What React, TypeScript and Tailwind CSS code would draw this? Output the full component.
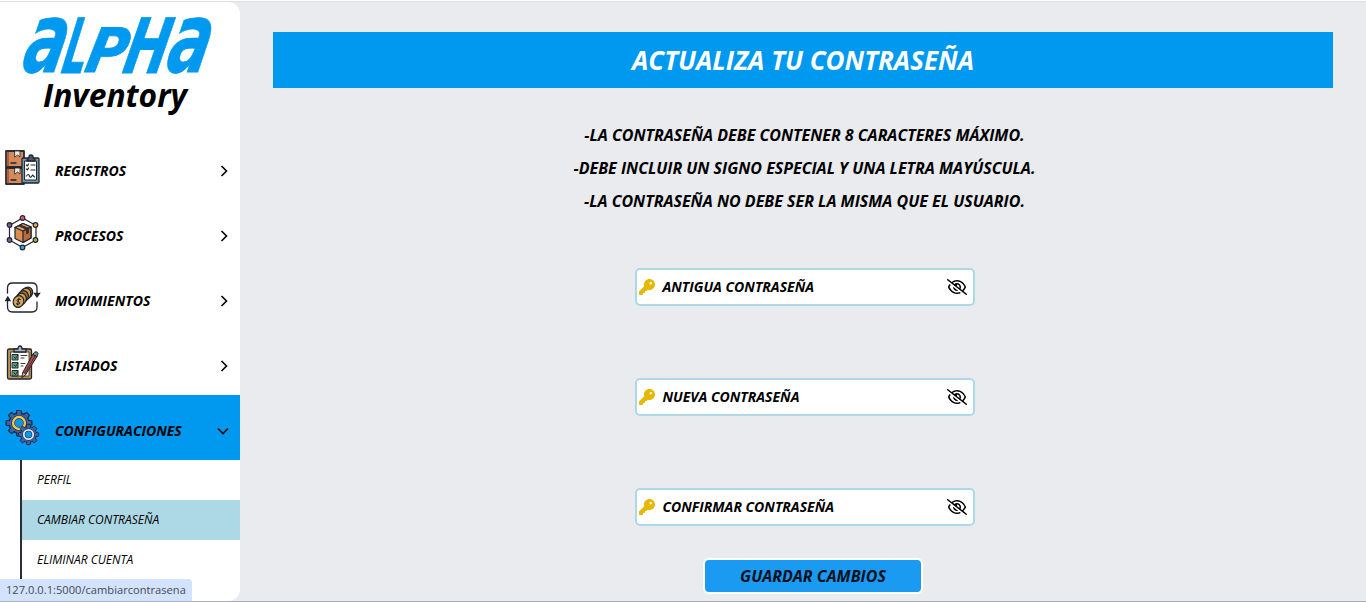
import type { ReactNode } from "react";
import { FaKey, FaRegEyeSlash } from "react-icons/fa6";

const ink = "#20242e";

function Logo() {
  return (
    <svg width="192" height="60" viewBox="0 0 192 60" className="block overflow-visible" fill="#0099f0" stroke="#0099f0" strokeWidth="0.8" fontFamily="'DejaVu Sans', sans-serif" fontWeight="700" aria-label="ALPHA">
      <g transform="translate(12.5 -1) skewX(-12)">
        <text x="-1" y="57.5" fontSize="97" textLength="42" lengthAdjust="spacingAndGlyphs">a</text>
        <text x="39" y="58.5" fontSize="76" textLength="24" lengthAdjust="spacingAndGlyphs">L</text>
        <text x="62" y="58.5" fontSize="61" textLength="41" lengthAdjust="spacingAndGlyphs">P</text>
        <text x="100" y="58.5" fontSize="76" textLength="44" lengthAdjust="spacingAndGlyphs">H</text>
        <text x="143" y="57.5" fontSize="97" textLength="42" lengthAdjust="spacingAndGlyphs">a</text>
      </g>
    </svg>
  );
}

function BoxesIcon() {
  return (
    <svg width="36" height="36" viewBox="0 0 36 36" stroke={ink} strokeWidth="1.3" strokeLinejoin="round" strokeLinecap="round">
      <path d="M1 1h18v16H1zM1 18h18v16H1z" fill="#d58a5c" />
      <path d="M1 1h3v16H1zM1 18h3v16H1z" fill="#a9613d" stroke="none" />
      <path d="M1 1h18v16H1zM1 18h18v16H1z" fill="none" />
      <path d="M10 1h5v6l-2.5-2L10 7zM10 18h5v6l-2.5-2-2.5 2z" fill="#f2eadf" strokeWidth="0.8" />
      <path d="M6 30h5M6 13h5" />
      <rect x="17" y="8" width="17" height="25" rx="1" fill="#6f9eaa" />
      <path d="M20 11h11.5v19H20z" fill="#fff" strokeWidth="1" />
      <path d="M22 10c0-2 2-1 2-3a2 2 0 0 1 4 0c0 2 2 1 2 3v1h-8z" fill="#4b5564" />
      <path d="m21.5 15 1 1 1-2M26 15h4M21.5 19l1 1 1-2M26 20h4M21.5 26q2-3 3 0t3-1l2 2" fill="none" strokeWidth="1.1" />
    </svg>
  );
}

function ProcessIcon() {
  return (
    <svg width="36" height="36" viewBox="0 0 36 36" stroke={ink} strokeWidth="1.2" strokeLinejoin="round">
      <path d="M17.5 3 31 10.500v14.500L17.500 32.500 4.500 25V10.500z" fill="none" />
      <circle cx="17.5" cy="3" r="2.3" fill="#e85670" />
      <circle cx="30.5" cy="10" r="2.3" fill="#e9ab3f" />
      <circle cx="30.5" cy="25" r="2.3" fill="#8bc52d" />
      <circle cx="17.5" cy="32.5" r="2.3" fill="#399fe3" />
      <circle cx="4.5" cy="25" r="2.3" fill="#7861a5" />
      <circle cx="4.5" cy="10" r="2.3" fill="#7f5c97" />
      <path d="m10 12.5 8-4 8 3.500v11l-8 4.500-8-4z" fill="#d98c54" />
      <path d="m10 12.5 8-4 8 3.500-8 4z" fill="#e5a66e" />
      <path d="m18 16 8-4v11l-8 4.500z" fill="#b76d3b" />
      <path d="m13.5 11 8 3.500v4.500l2-1v-5L15.500 10z" fill="#3a2a26" strokeWidth="0.6" />
    </svg>
  );
}

function CoinsIcon() {
  return (
    <svg width="36" height="36" viewBox="0 0 36 36" stroke={ink} strokeWidth="1.3" strokeLinecap="round">
      <path d="M2.5 13V8q0-5 5-5H27q5 0 5 5v6M32 22v5q0 5-5 5H7.500q-5 0-5-5v-7" fill="none" />
      <path d="M.7 20.500 2.800 17l2.200 3.500zM29.500 13.500h5L32 17z" fill={ink} />
      <ellipse cx="22.5" cy="12.5" rx="5" ry="5.5" fill="#a77129" transform="rotate(25 22.5 12.5)" />
      <ellipse cx="20.5" cy="14" rx="5.2" ry="6" fill="#d7a14b" transform="rotate(25 20.5 14)" />
      <ellipse cx="18" cy="16.5" rx="5.2" ry="6" fill="#a77129" transform="rotate(25 18 16.5)" />
      <ellipse cx="16" cy="19" rx="5.2" ry="6" fill="#d7a14b" transform="rotate(25 16 19)" />
      <ellipse cx="13.5" cy="21.5" rx="5.2" ry="6" fill="#d9a754" transform="rotate(25 13.5 21.5)" />
      <path d="M15.5 19.500q-3-1.500-3.500.800 0 1 1.500 1.400 2 .6 1 2.100-1 1.200-3.200 0M14 18l-1.500 7" fill="none" strokeWidth="1" />
    </svg>
  );
}

function ChecklistIcon() {
  return (
    <svg width="36" height="36" viewBox="0 0 36 36" stroke={ink} strokeWidth="1.3" strokeLinejoin="round" strokeLinecap="round">
      <rect x="2.5" y="4" width="24" height="30" rx="1.5" fill="#bd9356" />
      <path d="M6 7h18v24H6z" fill="#fffdf5" strokeWidth="0.8" />
      <path d="M9 7V4h4q0-3 2-3t2 3h4v3z" fill="#a7b3c5" />
      <path d="M7.5 9.500h5.500v5.500H7.500zM7.500 17.500h5.500v5.500H7.500zM7.500 25.500h5.500V31H7.500z" fill="#4f9f7a" strokeWidth="1" />
      <path d="m9 12 1.500 1.500L13 10M9 20l1.500 1.500L13 18M9 28l1.500 1.500L13 26M16 10.500h6M16 13h3M16 18.500h4M16 21h2" fill="none" strokeWidth="0.9" />
      <path d="m17 32 1-5L28 9l4 2.500L21 29z" fill="#ad4a49" strokeWidth="1" />
      <path d="m28 9 1.500-1.800q1.500-1 2.700 0 1.400 1.300.5 2.600l-.7 1.700z" fill="#6c9187" strokeWidth="1" />
      <path d="m20 28 10-17M17 32l1-5 3 2z" fill="#e3b08d" strokeWidth="0.7" />
    </svg>
  );
}

function Gear({ x, y, s, ring }: { x: number; y: number; s: number; ring: string }) {
  return (
    <g transform={`translate(${x} ${y}) scale(${s})`}>
      <g fill="#3e639f" stroke="#182b4c" strokeWidth="1.2">
        {[0, 45, 90, 135, 180, 225, 270, 315].map((a) => (
          <path key={a} d="M-3-9-2-13H2l1 4z" transform={`rotate(${a})`} />
        ))}
        <circle r="10" />
      </g>
      <g fill="#3e639f">
        {[0, 45, 90, 135, 180, 225, 270, 315].map((a) => (
          <path key={a} d="M-2.200-8.500-1.500-12h3l.7 3.500z" transform={`rotate(${a})`} />
        ))}
      </g>
      <circle r="6" fill="#0b96e9" stroke="#182b4c" strokeWidth="3.8" />
      <circle r="6" fill="none" stroke={ring} strokeWidth="2.4" />
    </g>
  );
}

function GearsIcon() {
  return (
    <svg width="36" height="36" viewBox="0 0 36 36">
      <Gear x={14} y={13} s={0.99} ring="#f3c64c" />
      <Gear x={23.5} y={24.5} s={0.78} ring="#d9e5ee" />
    </svg>
  );
}

function Chevron({ down = false }: { down?: boolean }) {
  return (
    <svg width="12" height="12" viewBox="0 0 12 12" fill="none" stroke="#06090d" strokeWidth="1.7" className={down ? "mt-[6px] mr-[11px]" : "mt-[6px] mr-[10px]"}>
      <path d={down ? "m1 3.5 5 5 5-5" : "m3.5 1 5 5-5 5"} />
    </svg>
  );
}

function MenuItem({ icon, label, active = false }: { icon: ReactNode; label: string; active?: boolean }) {
  return (
    <a className={`flex h-[65px] items-center ${active ? "bg-[#0099f0]" : ""}`}>
      <span className="ml-[5px] w-[50px] shrink-0">{icon}</span>
      <span className="mt-[6px] flex-1 text-[14px] font-bold">{label}</span>
      <Chevron down={active} />
    </a>
  );
}

function PasswordField({ label }: { label: string }) {
  return (
    <label className="flex h-[38px] w-[340px] items-center rounded-[5px] border-2 border-[#add8e6] bg-white pr-[6px] pl-[2px]">
      <FaKey size={16} color="#e6b800" className="shrink-0" />
      <span className="mb-px ml-[7.5px] flex-1 text-[14px] font-bold">{label}</span>
      <FaRegEyeSlash className="h-4 w-5" />
    </label>
  );
}

export default function App() {
  return (
    <div className="relative flex h-[602px] w-[1366px] flex-col overflow-hidden border-t border-b border-t-white border-b-[#adb0b8] bg-[#e9ebef] font-['Open_Sans',sans-serif] text-black italic">
      <div className="h-px shrink-0 bg-[#dfe1e4]" />
      <div className="flex min-h-0 flex-1">
        <aside className="flex w-60 shrink-0 flex-col rounded-r-[12px] bg-white">
          <header className="flex h-[133px] shrink-0 flex-col pt-[13px] pl-[21px]">
            <Logo />
            <h1 className="ml-[22px] text-[31.8px] leading-[40px] font-bold">Inventory</h1>
          </header>
          <nav>
            <MenuItem icon={<BoxesIcon />} label="REGISTROS" />
            <MenuItem icon={<ProcessIcon />} label="PROCESOS" />
            <MenuItem icon={<CoinsIcon />} label="MOVIMIENTOS" />
            <MenuItem icon={<ChecklistIcon />} label="LISTADOS" />
            <MenuItem icon={<GearsIcon />} label="CONFIGURACIONES" active />
            <ul className="ml-5 border-l-2 border-[#2a2d38] text-[12px]">
              <li className="flex h-10 items-center pl-[15px]">PERFIL</li>
              <li className="flex h-10 items-center bg-[#add8e6] pl-[15px]">CAMBIAR CONTRASEÑA</li>
              <li className="flex h-10 items-center pl-[15px]">ELIMINAR CUENTA</li>
            </ul>
          </nav>
        </aside>
        <main className="flex flex-1 flex-col items-center pt-[30px]">
          <h2 className="flex h-14 w-[1060px] shrink-0 items-center justify-center bg-[#0099f0] text-[26px] font-bold text-white">ACTUALIZA TU CONTRASEÑA</h2>
          <div className="mt-[31px] ml-[3px] text-center text-[16px] leading-[33px] font-bold">
            <p>-LA CONTRASEÑA DEBE CONTENER 8 CARACTERES MÁXIMO.</p>
            <p>-DEBE INCLUIR UN SIGNO ESPECIAL Y UNA LETRA MAYÚSCULA.</p>
            <p>-LA CONTRASEÑA NO DEBE SER LA MISMA QUE EL USUARIO.</p>
          </div>
          <form className="mt-[50px] ml-[4px] flex flex-col gap-[72px]">
            <PasswordField label="ANTIGUA CONTRASEÑA" />
            <PasswordField label="NUEVA CONTRASEÑA" />
            <PasswordField label="CONFIRMAR CONTRASEÑA" />
          </form>
          <button type="button" className="mt-[32px] ml-5 h-9 w-[220px] shrink-0 rounded-[6px] border-2 border-white bg-[#1a9af0] text-[16px] font-bold text-[#06101c] italic">GUARDAR CAMBIOS</button>
        </main>
      </div>
      <div className="absolute bottom-0 left-0 flex h-[22px] w-48 items-center rounded-tr-[4px] bg-[#d3e3fd] pt-px pl-[6px] text-[11.15px] whitespace-nowrap text-[#474a50] not-italic">127.0.0.1:5000/cambiarcontrasena</div>
    </div>
  );
}
